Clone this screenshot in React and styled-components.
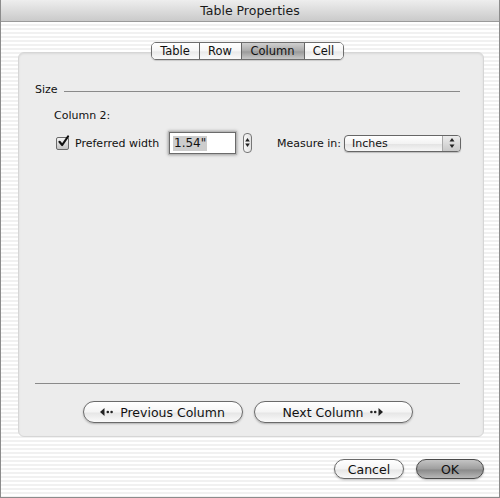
import React from 'react';
import styled, { createGlobalStyle } from 'styled-components';

const GlobalStyle = createGlobalStyle`
  html, body {
    margin: 0;
    padding: 0;
    background: #ffffff;
  }
  body {
    font-family: "DejaVu Sans", "Noto Sans", sans-serif;
    color: #111;
  }
`;

const tabs = ['Table', 'Row', 'Column', 'Cell'];
const tabWidths = [47, 41, 62, 38];

export default function App() {
  return (
    <>
      <GlobalStyle />
      <Window>
        <TitleBar>Table Properties</TitleBar>
        <Body>
          <TabRow>
            <Segmented>
              {tabs.map((t, i) => (
                <Tab key={t} $active={t === 'Column'} $width={tabWidths[i]}>
                  {t}
                </Tab>
              ))}
            </Segmented>
          </TabRow>
          <Panel>
            <GroupTitle>
              <span>Size</span>
              <Rule />
            </GroupTitle>
            <SubLabel>Column 2:</SubLabel>
            <FieldRow>
              <CheckLabel>
                <CheckBox>
                  <svg width="13" height="13" viewBox="0 0 13 13">
                    <path d="M2.5 6.8 L5.2 10 L11 1.5" fill="none" stroke="#111" strokeWidth="2.2" strokeLinecap="round" strokeLinejoin="round" />
                  </svg>
                </CheckBox>
                Preferred width
              </CheckLabel>
              <TextField>
                <Selected>1.54"</Selected>
              </TextField>
              <Stepper>
                <svg width="9" height="20" viewBox="0 0 9 20">
                  <polygon points="4.5,5 2.2,8.5 6.8,8.5" fill="#222" />
                  <polygon points="4.5,14 2.2,10.5 6.8,10.5" fill="#222" />
                </svg>
              </Stepper>
              <MeasureLabel>Measure in:</MeasureLabel>
              <Popup>
                <span>Inches</span>
                <PopupArrows>
                  <svg width="8" height="12" viewBox="0 0 8 12">
                    <polygon points="4,1 1.5,4.5 6.5,4.5" fill="#222" />
                    <polygon points="4,11 1.5,7.5 6.5,7.5" fill="#222" />
                  </svg>
                </PopupArrows>
              </Popup>
            </FieldRow>
            <Spacer />
            <Separator />
            <NavRow>
              <PillButton $width={160}>
                <Arrow $dir="left" />
                Previous Column
              </PillButton>
              <PillButton $width={159}>
                Next Column
                <Arrow $dir="right" />
              </PillButton>
            </NavRow>
          </Panel>
          <Footer>
            <PillButton $width={70} $small>Cancel</PillButton>
            <PillButton $width={68} $small $default>OK</PillButton>
          </Footer>
        </Body>
      </Window>
    </>
  );
}

function Arrow({ $dir }) {
  const left = $dir === 'left';
  return (
    <ArrowIcon width="14" height="8" viewBox="0 0 14 8" $left={left}>
      {left ? (
        <>
          <polygon points="0,4 4.5,0 4.5,8" fill="#222" />
          <circle cx="7.8" cy="4" r="1.3" fill="#222" />
          <circle cx="11.6" cy="4" r="1.3" fill="#222" />
        </>
      ) : (
        <>
          <circle cx="2.4" cy="4" r="1.3" fill="#222" />
          <circle cx="6.2" cy="4" r="1.3" fill="#222" />
          <polygon points="14,4 9.5,0 9.5,8" fill="#222" />
        </>
      )}
    </ArrowIcon>
  );
}

const ArrowIcon = styled.svg`
  margin: ${p => (p.$left ? '0 6px 0 0' : '0 0 0 6px')};
`;

const Window = styled.div`
  width: 500px;
  height: 498px;
  box-sizing: border-box;
  border: 1px solid #8c8c8c;
  border-top: none;
  display: flex;
  flex-direction: column;
  overflow: hidden;
`;

const TitleBar = styled.div`
  height: 21px;
  flex: none;
  border-bottom: 1px solid #9a9a9a;
  background: linear-gradient(to bottom, #eeeeee 0%, #dcdcdc 50%, #cacaca 100%);
  display: flex;
  align-items: center;
  justify-content: center;
  font-size: 12.5px;
  color: #1a1a1a;
`;

const Body = styled.div`
  flex: 1;
  display: flex;
  flex-direction: column;
  padding: 20px 15px 0 16px;
  background: repeating-linear-gradient(to bottom, #ffffff 0 2px, #f1f1f1 2px 4px);
`;

const TabRow = styled.div`
  display: flex;
  justify-content: center;
  margin: 0 0 -8px 0;
  position: relative;
  z-index: 1;
`;

const Segmented = styled.div`
  display: flex;
  height: 16px;
  border: 1px solid #6e6e6e;
  border-radius: 5px;
  overflow: hidden;
  margin-right: 7px;
  box-shadow: 0 1px 1px rgba(0, 0, 0, 0.15);
`;

const Tab = styled.div`
  width: ${p => p.$width}px;
  display: flex;
  align-items: center;
  justify-content: center;
  font-size: 11.5px;
  color: #111;
  border-left: 1px solid #666;
  background: ${p =>
    p.$active
      ? 'linear-gradient(to bottom, #d0d0d0 0%, #a9a9a9 50%, #9a9a9a 55%, #c8c8c8 100%)'
      : 'linear-gradient(to bottom, #ffffff 0%, #f6f6f6 50%, #e9e9e9 55%, #fafafa 100%)'};
  &:first-child {
    border-left: none;
  }
`;

const Panel = styled.div`
  height: 385px;
  box-sizing: border-box;
  margin: 0 0 0 1px;
  width: 466px;
  background: #ececec;
  border: 1px solid #d6d6d6;
  border-radius: 6px;
  display: flex;
  flex-direction: column;
  padding: 29px 23px 13px 16px;
  box-shadow: inset 0 1px 2px rgba(0, 0, 0, 0.08);
`;

const GroupTitle = styled.div`
  display: flex;
  align-items: center;
  gap: 6px;
  font-size: 11px;
  height: 14px;
`;

const Rule = styled.div`
  flex: 1;
  height: 1px;
  margin-top: 4px;
  background: #8a8a8a;
`;

const SubLabel = styled.div`
  font-size: 11px;
  margin: 13px 0 0 19px;
  height: 14px;
`;

const FieldRow = styled.div`
  display: flex;
  align-items: center;
  margin: 9px 0 0 21px;
  height: 22px;
  font-size: 11px;
  white-space: nowrap;
`;

const CheckLabel = styled.div`
  display: flex;
  align-items: center;
  gap: 6px;
  width: 113px;
  flex: none;
`;

const CheckBox = styled.div`
  width: 11px;
  height: 11px;
  flex: none;
  border: 1px solid #6a6a6a;
  border-radius: 2px;
  background: linear-gradient(to bottom, #f4f4f4, #c4c4c4);
  position: relative;
  svg {
    position: absolute;
    left: 0;
    top: -3px;
  }
`;

const TextField = styled.div`
  width: 67px;
  height: 22px;
  flex: none;
  box-sizing: border-box;
  border: 1px solid #6b6b6b;
  background: #fff;
  box-shadow: 0 0 0 1px #b8b8b8, 0 0 3px 1px #9a9a9a;
  display: flex;
  align-items: center;
  padding-left: 3px;
  font-size: 12px;
`;

const Selected = styled.span`
  background: #cdcdcd;
  padding: 0 1px;
  line-height: 15px;
`;

const Stepper = styled.div`
  width: 9px;
  height: 20px;
  flex: none;
  margin-left: 7px;
  border: 1px solid #777;
  border-radius: 4px;
  box-sizing: border-box;
  background: linear-gradient(to right, #f8f8f8, #e2e2e2);
  display: flex;
  align-items: center;
  justify-content: center;
  svg {
    flex: none;
  }
`;

const MeasureLabel = styled.div`
  margin-left: 25px;
  width: 67px;
  flex: none;
`;

const Popup = styled.div`
  width: 117px;
  height: 17px;
  flex: none;
  box-sizing: border-box;
  border: 1px solid #666;
  border-radius: 4px;
  background: linear-gradient(to bottom, #ffffff 0%, #f3f3f3 50%, #e4e4e4 55%, #f6f6f6 100%);
  display: flex;
  align-items: center;
  justify-content: space-between;
  padding-left: 7px;
  font-size: 11px;
  box-shadow: 0 1px 1px rgba(0, 0, 0, 0.2);
`;

const PopupArrows = styled.div`
  width: 17px;
  height: 100%;
  border-left: 1px solid #a8a8a8;
  display: flex;
  align-items: center;
  justify-content: center;
  background: linear-gradient(to bottom, #ececec, #c8c8c8);
  border-radius: 0 3px 3px 0;
`;

const Spacer = styled.div`
  flex: 1;
`;

const Separator = styled.div`
  height: 1px;
  background: #8a8a8a;
  margin-bottom: 17px;
`;

const NavRow = styled.div`
  display: flex;
  justify-content: center;
  gap: 11px;
`;

const PillButton = styled.div`
  width: ${p => p.$width}px;
  height: ${p => (p.$small ? 20 : 22)}px;
  box-sizing: border-box;
  border: 1px solid ${p => (p.$default ? '#4a4a4a' : '#6a6a6a')};
  border-radius: 11px;
  display: flex;
  align-items: center;
  justify-content: center;
  font-size: 12.5px;
  color: #111;
  background: ${p =>
    p.$default
      ? 'linear-gradient(to bottom, #c4c4c4 0%, #9e9e9e 50%, #8a8a8a 55%, #b8b8b8 100%)'
      : 'linear-gradient(to bottom, #ffffff 0%, #f4f4f4 50%, #e6e6e6 55%, #fafafa 100%)'};
  box-shadow: 0 1px 2px rgba(0, 0, 0, 0.25);
`;

const Footer = styled.div`
  display: flex;
  justify-content: flex-end;
  gap: 12px;
  margin-top: 22px;
`;
